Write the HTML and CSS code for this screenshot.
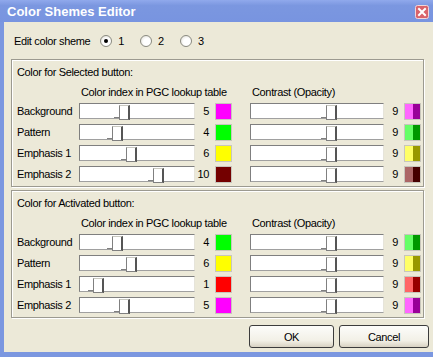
FILE: index.html
```html
<!DOCTYPE html>
<html lang="en">
<head>
    <meta charset="UTF-8">
    <title>Color Shemes Editor</title>
    <link rel="stylesheet" href="styles.css">
</head>
<body>
    <div class="window">
        <div class="titlebar">
            <span class="title">Color Shemes Editor</span>
            <span class="close-btn">
                <svg width="14" height="14" viewBox="0 0 14 14">
                    <rect x="0.5" y="0.5" width="13" height="13" rx="2" fill="#d9636b" stroke="#f2d6d8"/>
                    <path d="M4 4 L10 10 M10 4 L4 10" stroke="#fff" stroke-width="2" stroke-linecap="square"/>
                </svg>
            </span>
        </div>

        <div class="client">
            <div class="scheme-row">
                <span class="scheme-label">Edit color sheme</span>
                <label class="radio-item"><span class="radio checked"></span>1</label>
                <label class="radio-item"><span class="radio"></span>2</label>
                <label class="radio-item"><span class="radio"></span>3</label>
            </div>

            <div class="group">
                <div class="group-title">Color for Selected button:</div>
                <div class="grid">
                    <span class="col-head head-index">Color index in PGC lookup table</span>
                    <span class="col-head head-contrast">Contrast (Opacity)</span>

                    <span class="row-label">Background</span>
                    <div class="track"><span class="thumb" style="left: 34px"></span></div>
                    <span class="value">5</span>
                    <span class="swatch" style="--c: #ff00ff"></span>
                    <div class="track wide"><span class="thumb" style="left: 70px"></span></div>
                    <span class="value">9</span>
                    <span class="swatch split" style="--c: #ff00ff"></span>

                    <span class="row-label">Pattern</span>
                    <div class="track"><span class="thumb" style="left: 27px"></span></div>
                    <span class="value">4</span>
                    <span class="swatch" style="--c: #00ff00"></span>
                    <div class="track wide"><span class="thumb" style="left: 70px"></span></div>
                    <span class="value">9</span>
                    <span class="swatch split" style="--c: #00ff00"></span>

                    <span class="row-label">Emphasis 1</span>
                    <div class="track"><span class="thumb" style="left: 41px"></span></div>
                    <span class="value">6</span>
                    <span class="swatch" style="--c: #ffff00"></span>
                    <div class="track wide"><span class="thumb" style="left: 70px"></span></div>
                    <span class="value">9</span>
                    <span class="swatch split" style="--c: #ffff00"></span>

                    <span class="row-label">Emphasis 2</span>
                    <div class="track"><span class="thumb" style="left: 68px"></span></div>
                    <span class="value">10</span>
                    <span class="swatch" style="--c: #740000"></span>
                    <div class="track wide"><span class="thumb" style="left: 70px"></span></div>
                    <span class="value">9</span>
                    <span class="swatch split" style="--c: #740000"></span>
                </div>
            </div>

            <div class="group">
                <div class="group-title">Color for Activated button:</div>
                <div class="grid">
                    <span class="col-head head-index">Color index in PGC lookup table</span>
                    <span class="col-head head-contrast">Contrast (Opacity)</span>

                    <span class="row-label">Background</span>
                    <div class="track"><span class="thumb" style="left: 27px"></span></div>
                    <span class="value">4</span>
                    <span class="swatch" style="--c: #00ff00"></span>
                    <div class="track wide"><span class="thumb" style="left: 70px"></span></div>
                    <span class="value">9</span>
                    <span class="swatch split" style="--c: #00ff00"></span>

                    <span class="row-label">Pattern</span>
                    <div class="track"><span class="thumb" style="left: 41px"></span></div>
                    <span class="value">6</span>
                    <span class="swatch" style="--c: #ffff00"></span>
                    <div class="track wide"><span class="thumb" style="left: 70px"></span></div>
                    <span class="value">9</span>
                    <span class="swatch split" style="--c: #ffff00"></span>

                    <span class="row-label">Emphasis 1</span>
                    <div class="track"><span class="thumb" style="left: 8px"></span></div>
                    <span class="value">1</span>
                    <span class="swatch" style="--c: #ff0000"></span>
                    <div class="track wide"><span class="thumb" style="left: 70px"></span></div>
                    <span class="value">9</span>
                    <span class="swatch split" style="--c: #ff0000"></span>

                    <span class="row-label">Emphasis 2</span>
                    <div class="track"><span class="thumb" style="left: 34px"></span></div>
                    <span class="value">5</span>
                    <span class="swatch" style="--c: #ff00ff"></span>
                    <div class="track wide"><span class="thumb" style="left: 70px"></span></div>
                    <span class="value">9</span>
                    <span class="swatch split" style="--c: #ff00ff"></span>
                </div>
            </div>

            <div class="buttons">
                <button class="dlg-btn">OK</button>
                <button class="dlg-btn cancel-btn">Cancel</button>
            </div>
        </div>
    </div>
</body>
</html>
```

FILE: styles.css
```css
:root {
    --frame-color: #7b97e0;
    --face-color: #ece9d8;
    --text-color: #000000;
    --shadow-color: #808080;
}

* {
    margin: 0;
    padding: 0;
    box-sizing: border-box;
}

body {
    font-family: 'Liberation Sans', Arial, sans-serif;
    font-size: 11px;
    letter-spacing: -0.35px;
    color: var(--text-color);
    background-color: #ffffff;
}

.window {
    width: 433px;
    height: 357px;
    background-color: var(--frame-color);
    padding: 0 0 5px 4px;
    display: flex;
    flex-direction: column;
}

.titlebar {
    flex-shrink: 0;
    height: 22px;
    margin-left: -4px;
    padding: 0 4px 0 7px;
    display: flex;
    align-items: center;
    justify-content: space-between;
    background: linear-gradient(#90a9ec, #7b97e0 25%, #7894e0);
}

.title {
    color: #ffffff;
    font-weight: bold;
    font-size: 13px;
    letter-spacing: 0;
}

.close-btn {
    display: flex;
    margin-top: 1px;
}

.client {
    flex: 1;
    background-color: var(--face-color);
    padding: 0 4px 0 7px;
}

.scheme-row {
    display: flex;
    align-items: center;
    height: 14px;
    margin: 12px 0 0 3px;
}

.scheme-label {
    margin-right: 10px;
}

.radio-item {
    display: flex;
    align-items: center;
    margin-right: 16px;
}

.radio {
    width: 12px;
    height: 12px;
    border-radius: 50%;
    border: 1px solid #8a8a80;
    background: radial-gradient(circle at 60% 60%, #ffffff 40%, #dcdad0);
    margin-right: 6px;
    position: relative;
}

.radio.checked::after {
    content: "";
    position: absolute;
    left: 3px;
    top: 3px;
    width: 4px;
    height: 4px;
    border-radius: 50%;
    background-color: #000000;
}

.group {
    width: 413px;
    border: 1px solid #9c9a90;
    box-shadow: inset 1px 1px 0 #ffffff, 1px 1px 0 #ffffff;
    padding: 5px 0 2px 5px;
    margin-top: 11px;
}

.group + .group {
    margin-top: 3px;
}

.group-title {
    line-height: 14px;
}

.grid {
    display: grid;
    grid-template-columns: 62px 116px 20px 35px 134px 20px 17px;
    grid-template-rows: 15px;
    grid-auto-rows: 21px;
    margin-top: 6px;
}

.col-head {
    line-height: 14px;
}

.head-index {
    grid-column: 2 / 5;
    padding-left: 2px;
}

.head-contrast {
    grid-column: 5 / 8;
    padding-left: 2px;
}

.row-label {
    line-height: 21px;
    margin-top: 1px;
}

.track {
    position: relative;
    height: 16px;
    margin-top: 3px;
    background-color: #ffffff;
    border: 1px solid #7f7f7f;
    border-right-color: #e6e4da;
    border-bottom-color: #a0a0a0;
}

.thumb {
    position: absolute;
    top: 1px;
    width: 13px;
    height: 13px;
}

.thumb::before {
    content: "";
    position: absolute;
    left: 0;
    bottom: 0;
    width: 6px;
    height: 1px;
    background-color: var(--shadow-color);
}

.thumb::after {
    content: "";
    position: absolute;
    left: 5px;
    top: 0;
    width: 8px;
    height: 13px;
    border-top: 1px solid #c8c8c0;
    border-left: 1px solid var(--shadow-color);
    border-right: 2px solid #555555;
    border-bottom: 1px solid var(--shadow-color);
    background-color: #ffffff;
}

.value {
    text-align: right;
    padding-right: 6px;
    line-height: 21px;
    margin-top: 1px;
}

.swatch {
    width: 17px;
    height: 17px;
    margin-top: 3px;
    border: 1px solid #c8c6bc;
    background-color: var(--c);
}

.swatch.split {
    background: linear-gradient(to right,
        color-mix(in srgb, var(--c) 60%, #ffffff) 50%,
        color-mix(in srgb, var(--c) 60%, #000000) 50%);
}

.buttons {
    display: flex;
    justify-content: flex-end;
    gap: 5px;
    margin-top: 7px;
}

.dlg-btn {
    width: 85px;
    height: 23px;
    font-family: inherit;
    font-size: 11px;
    letter-spacing: inherit;
    color: var(--text-color);
    border: 1px solid #3c3c3c;
    border-radius: 3px;
    background: linear-gradient(#fcfcfa, #f2f0e6 70%, #d8d2c2);
}

.cancel-btn {
    width: 90px;
}
```
